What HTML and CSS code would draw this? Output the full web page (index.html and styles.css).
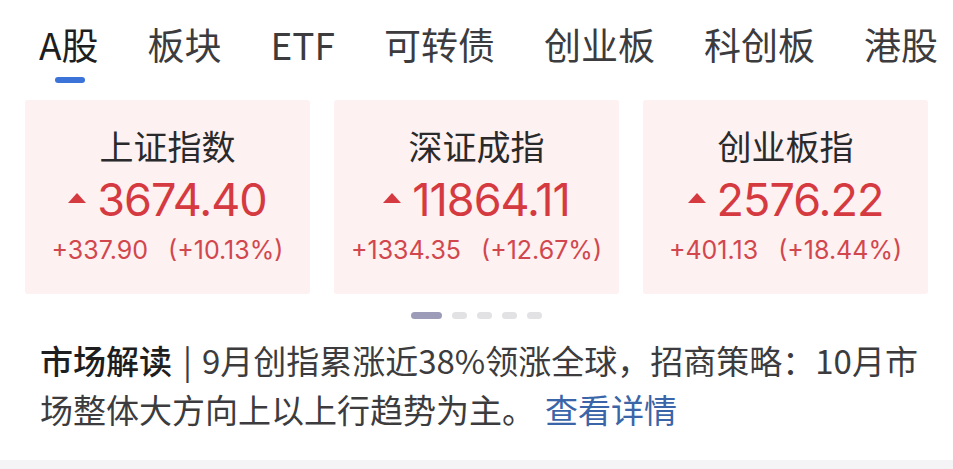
FILE: index.html
```html
<!DOCTYPE html>
<html lang="zh-CN">
<head>
<meta charset="utf-8">
<link rel="stylesheet" href="styles.css">
</head>
<body>
<div class="page">
  <nav class="tabs">
    <div class="tab active">A股<span class="bar"></span></div>
    <div class="tab">板块</div>
    <div class="tab">ETF</div>
    <div class="tab">可转债</div>
    <div class="tab">创业板</div>
    <div class="tab">科创板</div>
    <div class="tab">港股</div>
  </nav>
  <section class="cards">
    <div class="card">
      <div class="name">上证指数</div>
      <div class="price"><span class="tri"></span>3674.40</div>
      <div class="change">+337.90<span class="gap"></span>(+10.13%)</div>
    </div>
    <div class="card">
      <div class="name">深证成指</div>
      <div class="price"><span class="tri"></span>11864.11</div>
      <div class="change">+1334.35<span class="gap"></span>(+12.67%)</div>
    </div>
    <div class="card">
      <div class="name">创业板指</div>
      <div class="price"><span class="tri"></span>2576.22</div>
      <div class="change">+401.13<span class="gap"></span>(+18.44%)</div>
    </div>
  </section>
  <div class="dots">
    <span class="dot on"></span><span class="dot"></span><span class="dot"></span><span class="dot"></span><span class="dot"></span>
  </div>
  <p class="news"><span class="label">市场解读</span><span class="sep">|</span>9月创指累涨近38%领涨全球，招商策略：10月市场整体大方向上以上行趋势为主。<span class="sp"></span><a class="more">查看详情</a></p>
  <div class="footer"></div>
</div>
</body>
</html>
```
FILE: styles.css
```css
html, body {
  margin: 0;
  padding: 0;
  background: #ffffff;
}
body {
  font-family: "Noto Sans CJK SC", "Noto Sans", sans-serif;
  width: 953px;
  height: 469px;
  overflow: hidden;
}
.page {
  display: flex;
  flex-direction: column;
  height: 469px;
}
.tabs {
  display: flex;
  gap: 49px;
  padding: 18px 0 0 39px;
  height: 82px;
  box-sizing: border-box;
}
.tab {
  position: relative;
  font-size: 37px;
  line-height: 52px;
  color: #3c3c3e;
  white-space: nowrap;
}
.tab.active {
  color: #1e1e20;
}
.bar {
  position: absolute;
  left: 16px;
  top: 59px;
  width: 30px;
  height: 6px;
  border-radius: 3px;
  background: #3b73d9;
}
.cards {
  display: grid;
  grid-template-columns: repeat(3, 285px);
  gap: 24px;
  padding: 18px 25px 0 25px;
}
.card {
  background: #fdf1f1;
  height: 194px;
  border-radius: 3px;
  display: flex;
  flex-direction: column;
  align-items: center;
}
.name {
  margin-top: 26px;
  font-size: 34px;
  line-height: 40px;
  color: #2a2a2c;
}
.price {
  display: flex;
  align-items: center;
  margin-top: 8px;
  font-family: Inter, "Noto Sans", sans-serif;
  font-variant-numeric: proportional-nums;
  font-size: 45px;
  line-height: 52px;
  color: #d63a41;
  letter-spacing: -1px;
}
.tri {
  width: 0;
  height: 0;
  border-left: 9px solid transparent;
  border-right: 9px solid transparent;
  border-bottom: 10px solid #d63a41;
  margin-right: 11px;
  margin-top: -4px;
}
.change {
  display: flex;
  align-items: center;
  margin-top: 8px;
  font-family: Inter, "Noto Sans", sans-serif;
  font-variant-numeric: proportional-nums;
  font-size: 25px;
  line-height: 32px;
  color: #d2464d;
}
.gap {
  width: 20px;
}
.dots {
  display: flex;
  justify-content: center;
  gap: 10px;
  margin-top: 18px;
}
.dot {
  width: 15px;
  height: 7px;
  border-radius: 4px;
  background: #e2e2e4;
}
.dot.on {
  width: 31px;
  background: #9c9cb8;
}
.news {
  margin: 17px 30px 0 40px;
  font-size: 33px;
  line-height: 49px;
  color: #3c3c3e;
}
.label {
  color: #1e1e20;
  font-weight: 500;
}
.sep {
  display: inline-block;
  margin: 0 10px 0 11px;
  color: #3c3c3e;
}
.sp {
  display: inline-block;
  width: 10px;
}
.more {
  color: #3a65a8;
}
.footer {
  margin-top: auto;
  height: 9px;
  background: #f4f4f6;
}
```
